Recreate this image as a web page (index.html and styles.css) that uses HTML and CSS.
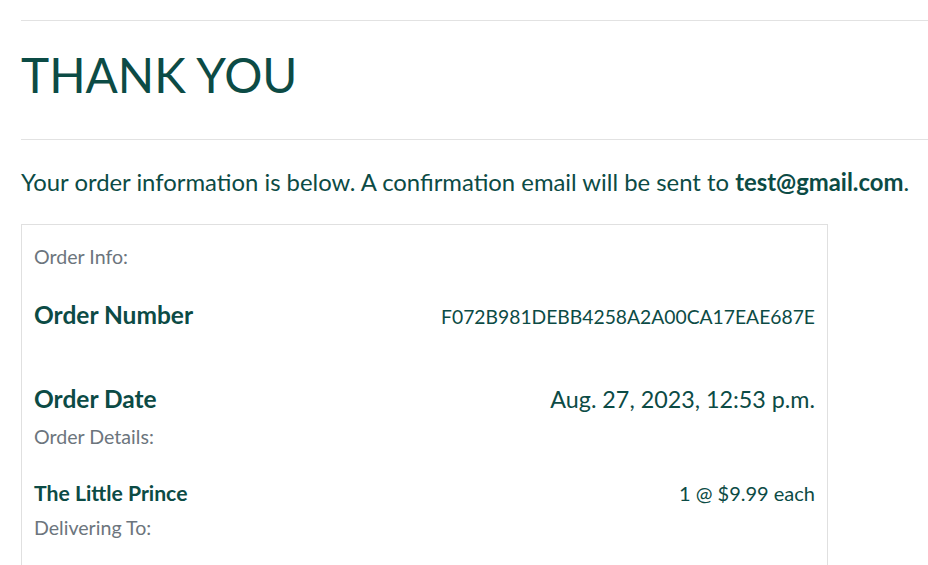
FILE: index.html
```html
<!DOCTYPE html>
<html>
<head>
<meta charset="utf-8">
<link rel="stylesheet" href="styles.css">
</head>
<body>
<div class="page">
  <hr class="rule">
  <h1 class="title">THANK YOU</h1>
  <hr class="rule">
  <p class="lead">Your order information is below. A confirmation email will be sent to <strong>test@gmail.com</strong>.</p>
  <div class="card">
    <div class="label">Order Info:</div>
    <div class="row row-number">
      <div class="key">Order Number</div>
      <div class="val val-small">F072B981DEBB4258A2A00CA17EAE687E</div>
    </div>
    <div class="row row-date">
      <div class="key">Order Date</div>
      <div class="val val-date">Aug. 27, 2023, 12:53 p.m.</div>
    </div>
    <div class="label label-tight">Order Details:</div>
    <div class="row row-item">
      <div class="item">The Little Prince</div>
      <div class="val val-item">1 @ $9.99 each</div>
    </div>
    <div class="label label-tight">Delivering To:</div>
  </div>
</div>
</body>
</html>
```
FILE: styles.css
```css
html, body {
  margin: 0;
  padding: 0;
  background: #fff;
}
body {
  font-family: Lato, "Open Sans", sans-serif;
  color: #0c4b45;
}
.page {
  padding: 20px 0 0 21px;
}
.rule {
  border: 0;
  border-top: 1px solid #e2e2e2;
  margin: 0;
}
.title {
  font-size: 47.7px;
  font-weight: 400;
  line-height: 57px;
  margin: 25px 0 36px;
}
.lead {
  font-size: 23.86px;
  line-height: 28px;
  margin: 28px 0 0;
}
.lead strong {
  font-weight: 700;
}
.card {
  margin-top: 28px;
  width: 781px;
  border: 1px solid #e0e0e0;
  padding: 17px 12px 40px 12px;
}
.label {
  color: #6c757d;
  font-size: 19.6px;
  line-height: 30px;
}
.label-tight {
  margin-top: 5px;
}
.row {
  display: flex;
  justify-content: space-between;
  align-items: baseline;
}
.key {
  font-size: 24.5px;
  font-weight: 700;
  line-height: 36px;
}
.val {
  font-size: 24px;
  line-height: 36px;
}
.val-small {
  font-size: 19.3px;
}
.val-date {
  font-size: 23.3px;
}
.row-number {
  margin-top: 25px;
}
.row-date {
  margin-top: 46px;
}
.row-item {
  margin-top: 26px;
}
.item {
  font-size: 21.2px;
  font-weight: 700;
  line-height: 30px;
}
.val-item {
  font-size: 20px;
  line-height: 30px;
}
```
